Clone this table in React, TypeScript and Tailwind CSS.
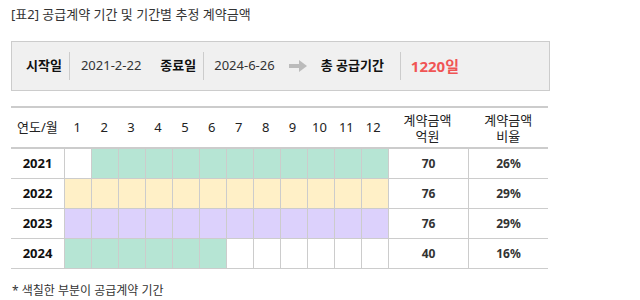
import React from "react";

const FONT = '"Noto Sans", "Noto Sans CJK KR", sans-serif';

type Row = { year: string; fill: boolean[]; color: string; amount: string; ratio: string };

const G = "bg-[#b6e5d4]";
const Y = "bg-[#fff0c7]";
const P = "bg-[#dcd1fc]";

const rows: Row[] = [
  { year: "2021", fill: [false, true, true, true, true, true, true, true, true, true, true, true], color: G, amount: "70", ratio: "26%" },
  { year: "2022", fill: Array(12).fill(true), color: Y, amount: "76", ratio: "29%" },
  { year: "2023", fill: Array(12).fill(true), color: P, amount: "76", ratio: "29%" },
  { year: "2024", fill: [true, true, true, true, true, true, false, false, false, false, false, false], color: G, amount: "40", ratio: "16%" },
];

export default function App() {
  return (
    <div className="w-[640px] h-[300px] bg-white text-[#222] overflow-hidden" style={{ fontFamily: FONT }}>
      <div className="pl-[11px] pt-[5px] text-[13px] leading-[18px] text-[#333]">[표2] 공급계약 기간 및 기간별 추정 계약금액</div>

      <div className="ml-[11px] mt-[18px] w-[539px] h-[50px] bg-[#f0f0f0] border border-[#cccccc] flex items-center text-[13px]">
        <span className="ml-[14px] font-bold text-[#111]">시작일</span>
        <span className="ml-[7px] w-px h-[28px] bg-[#cccccc]" />
        <span className="ml-[11px] text-[#333]">2021-2-22</span>
        <span className="ml-[19px] font-bold text-[#111]">종료일</span>
        <span className="ml-[7px] w-px h-[28px] bg-[#cccccc]" />
        <span className="ml-[10px] text-[#333]">2024-6-26</span>
        <svg className="ml-[14px]" width="18" height="12" viewBox="0 0 18 12">
          <rect x="0" y="4" width="11" height="4" fill="#bbbbbb" />
          <polygon points="10,0 18,6 10,12" fill="#bbbbbb" />
        </svg>
        <span className="ml-[14px] font-bold text-[#111]">총 공급기간</span>
        <span className="ml-[16px] w-px h-[28px] bg-[#cccccc]" />
        <span className="ml-[10px] font-bold text-[15px] text-[#f05555]">1220일</span>
      </div>

      <div className="ml-[11px] mt-[15px] w-[537px]">
        <div className="flex h-[43px] border-t-2 border-b-2 border-[#cccccc] items-center text-[13px]">
          <div className="w-[53px] text-center">연도/월</div>
          {Array.from({ length: 12 }, (_, i) => (
            <div key={i} className="w-[27px] text-center">{i + 1}</div>
          ))}
          <div className="w-[80px] text-center leading-[16px] ml-px">계약금액<br />억원</div>
          <div className="w-[80px] text-center leading-[16px] ml-px">계약금액<br />비율</div>
        </div>
        {rows.map((r) => (
          <div key={r.year} className="flex h-[30px] border-b border-[#cccccc]">
            <div className="w-[53px] flex items-center justify-center font-bold text-[13px] text-[#111]">{r.year}</div>
            {r.fill.map((f, i) => (
              <div key={i} className={"w-[27px] border-l border-[#cccccc] " + (f ? r.color : "bg-white")} />
            ))}
            <div className="w-[80px] border-l border-[#cccccc] flex items-center justify-center font-bold text-[12px] text-[#333]">{r.amount}</div>
            <div className="w-[80px] border-l border-[#cccccc] flex items-center justify-center font-bold text-[12px] text-[#333]">{r.ratio}</div>
          </div>
        ))}
      </div>

      <div className="pl-[12px] mt-[14px] text-[12px] leading-[16px] text-[#333]">* 색칠한 부분이 공급계약 기간</div>
    </div>
  );
}
